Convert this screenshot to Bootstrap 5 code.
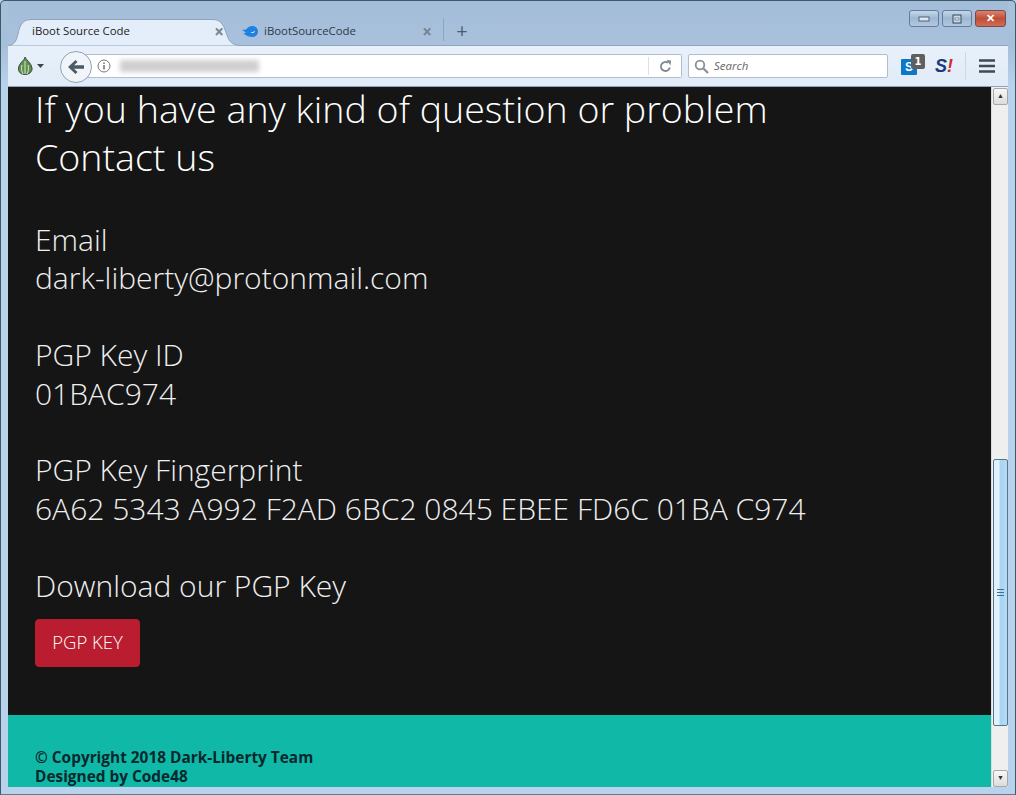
<!DOCTYPE html>
<html lang="en"><head><meta charset="utf-8"><title>iBoot Source Code</title>
<link href="https://cdn.jsdelivr.net/npm/bootstrap@5.3.0/dist/css/bootstrap.min.css" rel="stylesheet">
<style>
html,body{height:100%;overflow:hidden;margin:0}
body{background:#b9d3ec;font-family:"Open Sans","Liberation Sans",sans-serif}
.win{height:795px;border:1px solid #3a5a6a;border-bottom-color:#5d7a90;border-radius:5px 5px 0 0;padding:0 7px 7px 7px;background:linear-gradient(#a8c1db 0,#a5bfda 45px,#b9d3ec 86px)}
.tabstrip{height:45px;padding-left:12px;border-bottom:1px solid #8ea4b8;background:linear-gradient(#a3bcd8,#a9c1dc)}
.tabx{height:27px;margin-bottom:-1px;font-size:11.4px;color:#222;position:relative}
.tabon{width:215px;padding:0 11px 3px 12px}
.tabon>span{position:relative}
.tabshape{position:absolute;left:-12px;top:0}
.taboff{width:208px;padding:0 11px 3px 7px;color:#2c3a48}
.tabic{margin-right:6px}
.tabsep{width:1px;height:23px;background:#8ea4b8}
.plus{font-size:20px;line-height:1;color:#4a5f70;width:36px;text-align:center}
.closex{color:#78848e;font-size:17px;font-weight:700;line-height:1}
.wc{position:absolute;top:9px;right:2px;gap:3px}
.wbtn{width:30px;height:17px;border:1px solid #5e7d9d;border-radius:3px;background:linear-gradient(#c6d6e8,#9fb7d2 50%,#b4c8de);position:relative}
.wred{width:31px;background:linear-gradient(#d9836f,#c04f3a 50%,#cf6b55);border-color:#7a4a46;color:#fff;font-size:11px;font-weight:700;line-height:14px;text-align:center}
.toolbar{height:41px;background:linear-gradient(#e8f1fb,#e0ebf7);border-bottom:1px solid #8ea4b8;padding:0 0 0 9px}
.onion{width:36px;flex:none}
.backb{width:32px;height:32px;border-radius:50%;background:#f1f5fa;border:1px solid #8fa2b4;margin-left:7px;margin-top:1px;z-index:2;flex:none}
.urlb{width:600px;height:24px;margin-left:-10px;padding-left:11px;background:#fff;border:1px solid #b1bfcc;border-left:0;border-radius:0 2px 2px 0;flex:none}
.blurry{width:139px;height:12px;margin-left:9px;background:#cfcfcf;filter:blur(2.5px)}
.urlsep{width:1px;height:18px;background:#dbe1e7;margin-left:auto}
.reload{width:32px}
.searchb{width:200px;height:24px;margin-left:6px;padding-left:5px;gap:5px;background:#fff;border:1px solid #b1bfcc;border-radius:2px;font-size:11.5px;font-style:italic;color:#666;flex:none}
.ext{width:26px;height:24px;position:relative;flex:none}
.sblue{position:absolute;left:4px;top:5px;width:16px;height:16px;border-radius:1px;background:#0d77c8;color:#fff;font-size:12px;font-weight:800;line-height:16px;text-align:center;font-family:"Liberation Sans",sans-serif}
.snum{position:absolute;left:14px;top:0;width:14px;height:15px;border-radius:2px;background:#5f5f5f;color:#fff;font-size:10px;font-weight:700;line-height:15px;text-align:center;font-family:"DejaVu Sans",sans-serif}
.shil{font:italic 800 18px/20px "Liberation Sans",sans-serif;color:#1a3a80}
.shil b{color:#d42a2a}
.tbsep{width:1px;height:28px;background:#ccd8e4}
.burger{width:42px}
.viewport{height:700px}
.pagex{width:983px;height:700px;background:#151515;color:#f2f2f2;font-weight:300}
.contentx{height:628px;padding-left:27px}
.bigh{font-size:37.6px;font-weight:300;margin:0 0 40px;color:#fff}
.bigh1{line-height:44px}
.bigh2{line-height:48px;margin-top:2px}
.subh{font-size:30px;line-height:38.4px;font-weight:300;margin:0 0 14px;color:#efefef}
.keybtn{--bs-btn-bg:#b91d2f;--bs-btn-border-color:#b91d2f;--bs-btn-hover-bg:#b91d2f;--bs-btn-hover-border-color:#b91d2f;--bs-btn-font-size:18.5px;--bs-btn-font-weight:300;--bs-btn-padding-x:16px;--bs-btn-padding-y:8px;--bs-btn-border-radius:4px;--bs-btn-color:#fff;height:48px;width:105px;white-space:nowrap}
.footx{height:72px;background:#10b8a8;padding:33px 0 0 27px;color:#07282c;font-size:15.4px;line-height:19px;font-weight:700;margin-top:auto}
.sbar{width:17px;height:700px;background:#efefef;border-left:1px solid #dcdcdc}
.sarrow{height:17px;width:15px;margin:1px 0 0 1px;background:linear-gradient(#f8f8f8,#dcdcdc);border:1px solid #a8a8a8;border-radius:2px;font-size:7px;line-height:13px;text-align:center;color:#333;flex:none}
.sthumb{height:267px;width:15px;margin:auto 0 43px 1px;border:1px solid #5a7488;border-radius:2px;background:linear-gradient(90deg,#dff1fc 0,#dff1fc 40%,#a8d4f2 45%,#b4dcf6 100%);flex:none}
.grip{width:7px;height:7px;border-top:1px solid #3f6f8f;border-bottom:1px solid #3f6f8f;position:relative}
.grip::after{content:"";position:absolute;left:0;right:0;top:2px;height:1px;background:#3f6f8f}
</style></head>
<body>
<div class="win d-flex flex-column">
 <div class="tabstrip d-flex align-items-end position-relative">
  <div class="tabx tabon d-flex align-items-center justify-content-between">
   <svg class="tabshape" width="233" height="27" viewBox="0 0 233 27"><path d="M0 26.500 C6 26 8 23 10 15 C12 5 15 .5 24 .5 H205 C214 .5 216 8 219 16 C221 23 225 26 232 26.500 V27 H0Z" fill="#e4eefa" stroke="#8ea4b8"/></svg>
   <span>iBoot Source Code</span><span class="closex">×</span></div>
  <div class="tabx taboff d-flex align-items-center">
   <svg width="16" height="11" viewBox="0 0 16 11" class="tabic"><path d="M0 4 L4 3.500 C6 1 8 0 10.500 0 C14 0 16 2.500 16 5.500 C16 8.500 14 11 10.500 11 C7 11 4.500 10 1.500 7.500 L4 6.500Z" fill="#1d82e0"/><path d="M8 6 C10 8 13 7 13 4.500 C12 6 10 6.500 8 6Z" fill="#e6f0fa"/></svg>
   <span>iBootSourceCode</span><span class="closex ms-auto">×</span></div>
  <div class="tabsep align-self-end mb-1"></div>
  <div class="plus align-self-end mb-1">+</div>
  <div class="wc d-flex">
   <div class="wbtn d-flex align-items-center justify-content-center"><svg width="12" height="6"><rect x="1" y="1" width="10" height="4" fill="#dfe8f2" stroke="#4a627a"/></svg></div>
   <div class="wbtn d-flex align-items-center justify-content-center"><svg width="10" height="10"><rect x="1" y="1" width="8" height="8" fill="#c8d6e6" stroke="#33485c"/><rect x="3" y="4" width="4" height="2" fill="#eef3f8" stroke="#33485c" stroke-width=".5"/></svg></div>
   <div class="wbtn wred">✕</div>
  </div>
 </div>
 <div class="toolbar d-flex align-items-center">
  <div class="onion d-flex align-items-center">
   <svg width="28" height="18" viewBox="0 0 28 18"><path d="M8 0 C8 3 2 6 1.500 11 C1 15 4 17.500 8 17.500 C12 17.500 15.500 15 15 11 C14.500 6 9 3 8 0Z" fill="#5f8f50" stroke="#3a4a3a"/><path d="M8 4 V17 M5 8 C4 11 4.500 14 6 17 M11 8 C12 11 11.500 14 10 17" stroke="#d5e8c8" fill="none"/><path d="M20 7 h7 l-3.500 4z" fill="#444"/></svg>
  </div>
  <div class="backb d-flex align-items-center justify-content-center"><svg width="16" height="14" viewBox="0 0 16 14"><path d="M7.500 0 L0 7 L7.500 14 L9.500 12 L6 8.800 H16 V5.200 H6 L9.500 2Z" fill="#4d5a66"/></svg></div>
  <div class="urlb d-flex align-items-center">
   <svg width="14" height="14" viewBox="0 0 14 14" class="ms-1 flex-shrink-0"><circle cx="7" cy="7" r="6" fill="none" stroke="#777"/><rect x="6.300" y="6" width="1.400" height="4.500" fill="#666"/><rect x="6.300" y="3.500" width="1.400" height="1.500" fill="#666"/></svg>
   <div class="blurry"></div>
   <div class="urlsep"></div>
   <div class="reload d-flex justify-content-center"><svg width="13" height="13" viewBox="0 0 13 13"><path d="M10.800 7.500 A4.500 4.500 0 1 1 9 2.800" fill="none" stroke="#7a8792" stroke-width="1.800"/><path d="M7.500 0 L12 0.500 L11.500 5.500Z" fill="#7a8792"/></svg></div>
  </div>
  <div class="searchb d-flex align-items-center"><svg width="15" height="15" viewBox="0 0 15 15"><circle cx="6" cy="6" r="4.300" fill="none" stroke="#8a8f94" stroke-width="1.800"/><path d="M9.500 9.500 L14 14" stroke="#8a8f94" stroke-width="2.200"/></svg><span>Search</span></div>
  <div class="ext ms-auto"><div class="sblue">S</div><div class="snum">1</div></div>
  <div class="ext ms-2 d-flex align-items-center justify-content-center"><span class="shil">S<b>!</b></span></div>
  <div class="tbsep ms-2"></div>
  <div class="burger d-flex justify-content-center"><svg width="16" height="14"><path d="M0 1.500H16M0 7H16M0 12.500H16" stroke="#3f4a54" stroke-width="2.600"/></svg></div>
 </div>
 <div class="viewport d-flex">
  <div class="pagex d-flex flex-column">
   <div class="contentx">
    <h1 class="bigh"><div class="bigh1">If you have any kind of question or problem</div><div class="bigh2">Contact us</div></h1>
    <h2 class="subh">Email<br>dark-liberty@protonmail.com<br><br>PGP Key ID<br>01BAC974<br><br>PGP Key Fingerprint<br>6A62 5343 A992 F2AD 6BC2 0845 EBEE FD6C 01BA C974<br><br>Download our PGP Key</h2>
    <a class="btn keybtn" href="#">PGP KEY</a>
   </div>
   <div class="footx">© Copyright 2018 Dark-Liberty Team<br>Designed by Code48</div>
  </div>
  <div class="sbar d-flex flex-column">
   <div class="sarrow">▲</div>
   <div class="sthumb d-flex align-items-center justify-content-center"><div class="grip"></div></div>
   <div class="sarrow">▼</div>
  </div>
 </div>
</div>
<script src="https://cdn.jsdelivr.net/npm/bootstrap@5.3.0/dist/js/bootstrap.bundle.min.js"></script>
</body></html>
